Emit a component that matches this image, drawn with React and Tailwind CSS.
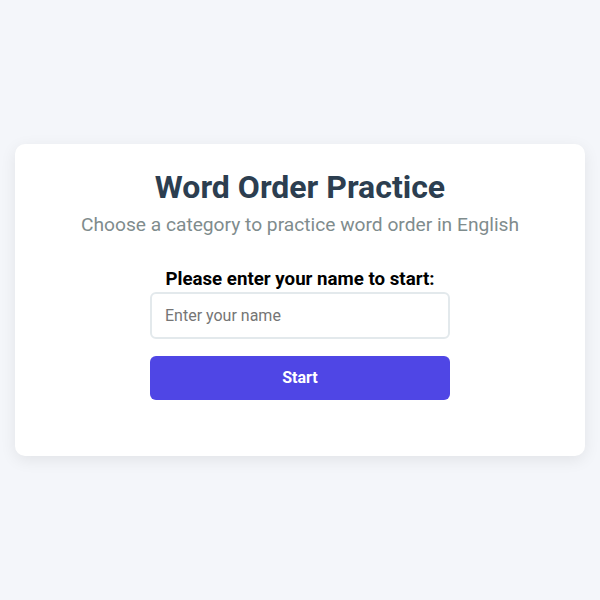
import { useState } from "react"

export default function App() {
  const [name, setName] = useState("")

  return (
    <div className="min-h-screen bg-[#f4f6fa] flex items-center px-[15px] font-['Roboto',sans-serif]">
      <div className="w-full bg-white rounded-[10px] shadow-[0_4px_16px_rgba(0,0,0,0.08)] pt-[24px] pb-[56px] flex flex-col items-center">
        <h1 className="text-[32px] leading-[38px] font-bold text-[#2c3e50]">Word Order Practice</h1>
        <p className="mt-[5px] text-[19.2px] leading-[28px] text-[#7f8c8d]">
          Choose a category to practice word order in English
        </p>
        <label className="mt-[30px] text-[18.7px] leading-[21px] font-bold text-black">
          Please enter your name to start:
        </label>
        <input
          value={name}
          onChange={(e) => setName(e.target.value)}
          placeholder="Enter your name"
          className="mt-[2px] w-[300px] h-[47px] px-[13px] text-[16px] rounded-[6px] border-2 border-[#e3e9ec] outline-none placeholder:text-[#757575]"
        />
        <button className="mt-[17px] w-[300px] h-[44px] rounded-[6px] bg-[#4f46e5] text-white text-[16px] font-bold">
          Start
        </button>
      </div>
    </div>
  )
}
